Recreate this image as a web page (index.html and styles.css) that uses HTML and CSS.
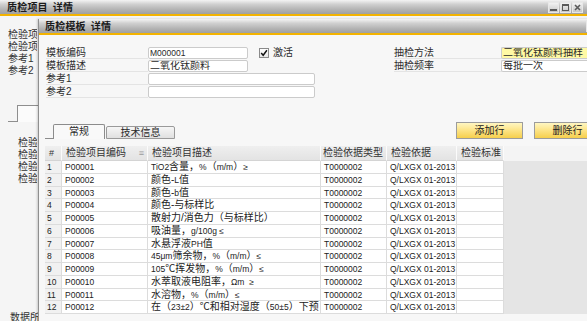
FILE: index.html
```html
<!DOCTYPE html>
<html lang="zh">
<head>
<meta charset="utf-8">
<title>质检模板 详情</title>
<link rel="stylesheet" href="styles.css">
</head>
<body>
<div class="desk">
  <section class="win outer">
    <header class="tbar">
      <span class="ttl">质检项目&nbsp;&nbsp;详情</span>
      <div class="wbtns">
        <span class="wb"><svg viewBox="0 0 11 11" width="11" height="11"><rect x="2" y="7" width="7" height="2" fill="#5a5a5a"/></svg></span>
        <span class="wb"><svg viewBox="0 0 11 11" width="11" height="11"><rect x="2.5" y="2.5" width="6" height="6" fill="none" stroke="#5a5a5a" stroke-width="1"/><rect x="2" y="2" width="7" height="2" fill="#5a5a5a"/></svg></span>
        <span class="wb"><svg viewBox="0 0 11 11" width="11" height="11"><path d="M3 3 L8 8 M8 3 L3 8" stroke="#5a5a5a" stroke-width="1.6"/></svg></span>
      </div>
    </header>
    <div class="obody">
      <div class="olist">
        <div>检验项</div>
        <div>检验项</div>
        <div>参考1</div>
        <div>参考2</div>
      </div>
      <div class="otab"><span class="otab-base"></span><span class="otab-tab"></span></div>
      <div class="olist olist2">
        <div>检验</div>
        <div>检验</div>
        <div>检验</div>
        <div>检验</div>
      </div>
      <div class="obottom">数据所</div>
    </div>
  </section>

  <section class="win inner">
    <header class="tbar">
      <span class="ttl">质检模板&nbsp;&nbsp;详情</span>
      <div class="wbtns">
        <span class="wb"><svg viewBox="0 0 11 11" width="11" height="11"><rect x="2" y="7" width="7" height="2" fill="#5a5a5a"/></svg></span>
        <span class="wb"><svg viewBox="0 0 11 11" width="11" height="11"><rect x="2.5" y="2.5" width="6" height="6" fill="none" stroke="#5a5a5a"/></svg></span>
        <span class="wb"><svg viewBox="0 0 11 11" width="11" height="11"><path d="M3 3 L8 8 M8 3 L3 8" stroke="#5a5a5a" stroke-width="1.6"/></svg></span>
      </div>
    </header>
    <div class="ibody">
      <div class="form">
        <div class="lab">模板编码</div>
        <div class="fld lt">M000001</div>
        <div class="chk"><span class="box"><svg viewBox="0 0 10 10" width="8" height="8"><path d="M1.5 5 L4 7.8 L8.6 1.6" fill="none" stroke="#111" stroke-width="1.8"/></svg></span><span>激活</span></div>
        <div class="lab r">抽检方法</div>
        <div class="fld yel">二氧化钛颜料抽样</div>

        <div class="lab">模板描述</div>
        <div class="fld">二氧化钛颜料</div>
        <div class="lab r">抽检频率</div>
        <div class="fld">每批一次</div>

        <div class="lab">参考1</div>
        <div class="fld wide"></div>

        <div class="lab">参考2</div>
        <div class="fld wide"></div>
      </div>

      <div class="tabrow">
        <div class="tabs">
          <span class="tbase"></span>
          <span class="tab on">常规</span>
          <span class="tab">技术信息</span>
        </div>
        <div class="btns">
          <span class="btn">添加行</span>
          <span class="btn">删除行</span>
        </div>
      </div>

      <div class="grid">
        <div class="ghead">
          <span class="hc c0">#</span>
          <span class="hc c1">检验项目编码<i class="sort">≡</i></span>
          <span class="hc c2">检验项目描述</span>
          <span class="hc c3">检验依据类型</span>
          <span class="hc c4">检验依据</span>
          <span class="hc c5">检验标准</span>
        </div>
        <div class="gr"><span class="c c0">1</span><span class="c c1">P00001</span><span class="c c2"><span class="l">TiO2</span>含量，<span class="l">%</span>（<span class="l">m/m</span>）<span class="l">≥</span></span><span class="c c3">T0000002</span><span class="c c4">Q/LXGX 01-2013</span><span class="c c5"></span></div>
        <div class="gr"><span class="c c0">2</span><span class="c c1">P00002</span><span class="c c2">颜色-<span class="l">L</span>值</span><span class="c c3">T0000002</span><span class="c c4">Q/LXGX 01-2013</span><span class="c c5"></span></div>
        <div class="gr"><span class="c c0">3</span><span class="c c1">P00003</span><span class="c c2">颜色-<span class="l">b</span>值</span><span class="c c3">T0000002</span><span class="c c4">Q/LXGX 01-2013</span><span class="c c5"></span></div>
        <div class="gr"><span class="c c0">4</span><span class="c c1">P00004</span><span class="c c2">颜色-与标样比</span><span class="c c3">T0000002</span><span class="c c4">Q/LXGX 01-2013</span><span class="c c5"></span></div>
        <div class="gr"><span class="c c0">5</span><span class="c c1">P00005</span><span class="c c2">散射力/消色力（与标样比）</span><span class="c c3">T0000002</span><span class="c c4">Q/LXGX 01-2013</span><span class="c c5"></span></div>
        <div class="gr"><span class="c c0">6</span><span class="c c1">P00006</span><span class="c c2">吸油量，<span class="l">g/100g ≤</span></span><span class="c c3">T0000002</span><span class="c c4">Q/LXGX 01-2013</span><span class="c c5"></span></div>
        <div class="gr"><span class="c c0">7</span><span class="c c1">P00007</span><span class="c c2">水悬浮液<span class="l">PH</span>值</span><span class="c c3">T0000002</span><span class="c c4">Q/LXGX 01-2013</span><span class="c c5"></span></div>
        <div class="gr"><span class="c c0">8</span><span class="c c1">P00008</span><span class="c c2"><span class="l">45μm</span>筛余物，<span class="l">%</span>（<span class="l">m/m</span>）<span class="l">≤</span></span><span class="c c3">T0000002</span><span class="c c4">Q/LXGX 01-2013</span><span class="c c5"></span></div>
        <div class="gr"><span class="c c0">9</span><span class="c c1">P00009</span><span class="c c2"><span class="l">105</span>℃挥发物，<span class="l">%</span>（<span class="l">m/m</span>）<span class="l">≤</span></span><span class="c c3">T0000002</span><span class="c c4">Q/LXGX 01-2013</span><span class="c c5"></span></div>
        <div class="gr"><span class="c c0">10</span><span class="c c1">P00010</span><span class="c c2">水萃取液电阻率，<span class="l">Ωm&nbsp;&nbsp;≥</span></span><span class="c c3">T0000002</span><span class="c c4">Q/LXGX 01-2013</span><span class="c c5"></span></div>
        <div class="gr"><span class="c c0">11</span><span class="c c1">P00011</span><span class="c c2">水溶物，<span class="l">%</span>（<span class="l">m/m</span>）<span class="l">≤</span></span><span class="c c3">T0000002</span><span class="c c4">Q/LXGX 01-2013</span><span class="c c5"></span></div>
        <div class="gr"><span class="c c0">12</span><span class="c c1">P00012</span><span class="c c2">在（<span class="l">23±2</span>）℃和相对湿度（<span class="l">50±5</span>）下预</span><span class="c c3">T0000002</span><span class="c c4">Q/LXGX 01-2013</span><span class="c c5"></span></div>
      </div>
    </div>
  </section>
</div>
</body>
</html>
```

FILE: styles.css
```css
* { box-sizing: border-box; }
html, body { margin: 0; padding: 0; }
body {
  width: 587px;
  height: 321px;
  overflow: hidden;
  font-family: "Liberation Sans", "Noto Sans CJK SC", sans-serif;
  font-size: 10px;
  color: #2a2a2a;
  background: #f4f4f4;
}
.desk { position: relative; width: 587px; height: 321px; overflow: hidden; }

.win { display: flex; flex-direction: column; }
.outer { width: 587px; height: 321px; background: #f5f5f5; }

.tbar {
  flex: none;
  height: 16px;
  display: flex;
  align-items: center;
  justify-content: space-between;
  background: linear-gradient(#f4f4f4 0%, #d0d0d0 30%, #b2b2b2 70%, #a0a0a0 100%);
  border-bottom: 2px solid #f3b300;
}
.ttl {
  font-family: "Noto Sans CJK SC", sans-serif;
  font-weight: 700;
  font-size: 10px;
  line-height: 12px;
  color: #1b1b1b;
  padding-left: 7px;
  letter-spacing: 0.2px;
}
.wbtns { display: flex; gap: 1px; padding-right: 4px; }
.wb {
  width: 11px; height: 11px;
  background: linear-gradient(#f2f2f2, #c8c8c8);
  border: 1px solid #e8e8e8;
  display: flex;
}
.wb svg { display: block; margin: -1px; }

.obody { padding-left: 8px; color: #333; }
.olist { margin-top: 13px; width: 29px; overflow: hidden; }
.olist div { height: 12px; line-height: 12px; white-space: nowrap; }
.otab { display: flex; margin-top: 28px; height: 17px; }
.otab-base { width: 9px; border-bottom: 1px solid #8e8e8e; }
.otab-tab { width: 30px; border-top: 1px solid #8e8e8e; border-left: 1px solid #8e8e8e; background: #fbfbfb; }
.olist2 { margin-top: 15px; padding-left: 10px; width: 29px; }
.obottom {
  margin-top: 127px;
  padding-left: 2px;
  line-height: 12px;
  width: 29px;
  white-space: nowrap;
}

.inner {
  position: absolute;
  left: 38px;
  top: 19px;
  width: 588px;
  height: 320px;
  background: #f7f7f7;
  border-left: 1px solid #8f8f8f;
  box-shadow: -1px 0 2px rgba(0, 0, 0, 0.18);
}
.inner .tbar { height: 16px; }
.inner .ttl { padding-left: 6px; }
.inner .wbtns { padding-right: 3px; gap: 2px; }

.ibody { padding-left: 7px; }

.form {
  display: grid;
  grid-template-columns: 102px 100px 67px 79px 107px 100px;
  grid-auto-rows: 12px;
  row-gap: 1px;
  margin-top: 12px;
}
.lab {
  grid-column: 1;
  line-height: 11px;
  border-bottom: 1px solid #e4e4e4;
  white-space: nowrap;
  color: #2e2e2e;
}
.lab.r { grid-column: 5; }
.fld {
  grid-column: 2;
  background: #fff;
  border: 1px solid #cbcbcb;
  border-radius: 2px;
  line-height: 10px;
  padding-left: 1px;
  white-space: nowrap;
  overflow: hidden;
}
.fld.lt { font-size: 8.5px; }
.form .lab.r + .fld { grid-column: 6; border-right: none; border-radius: 2px 0 0 2px; }
.fld.yel { background: #fff9a4; }
.fld.wide { grid-column: 2 / span 2; }
.chk {
  grid-column: 3 / span 2;
  display: flex;
  align-items: center;
  gap: 4px;
  padding-left: 11px;
  line-height: 12px;
}
.box {
  width: 10px; height: 10px;
  border: 1px solid #8a8a8a;
  background: linear-gradient(#ffffff, #e6e6e6);
  display: flex; align-items: center; justify-content: center;
}

.tabrow { display: flex; align-items: flex-end; margin-top: 24px; margin-left: -1px; height: 17px; }
.tabs { display: flex; align-items: flex-end; height: 17px; }
.tbase { width: 8px; height: 1px; border-bottom: 1px solid #8c8c8c; }
.tab {
  width: 69px; height: 13px;
  border: 1px solid #9a9a9a;
  border-radius: 2px 2px 0 0;
  background: linear-gradient(#f6f6f6, #e0e0e0);
  text-align: center;
  line-height: 11px;
  margin-left: 1px;
}
.tab.on {
  width: 52px; height: 15px;
  margin-left: 0;
  border-color: #8c8c8c;
  border-bottom: none;
  background: #f9f9f9;
  line-height: 14px;
}
.btns { display: flex; gap: 11px; margin-left: 281px; }
.btn {
  width: 67px; height: 17px;
  border: 1px solid #9c9c9c;
  background: linear-gradient(#fff6c2 0%, #fde58a 45%, #f6cf4c 100%);
  text-align: center;
  line-height: 15px;
  color: #222;
}

.grid {
  margin-top: 7px;
  margin-left: -1px;
  height: 168px;
  background: #e5e5e5;
}
.ghead { display: flex; height: 15px; background: #f4f4f4; }
.hc {
  height: 15px;
  line-height: 14px;
  background: linear-gradient(#efefef, #e3e3e3);
  border-right: 1px solid #fbfbfb;
  border-bottom: 1px solid #d4d4d4;
  padding-left: 4px;
  white-space: nowrap;
  overflow: hidden;
  position: relative;
  color: #333;
}
.hc.c0 { padding-left: 4px; font-size: 9px; }
.hc.c3 { padding-left: 2px; }
.sort { position: absolute; right: 3px; top: 0; font-style: normal; color: #9a9a9a; font-size: 9px; }
.c0 { width: 17px; }
.c1 { width: 86px; }
.c2 { width: 173px; }
.c3 { width: 66px; }
.c4 { width: 70px; }
.c5 { width: 47px; }

.gr { display: flex; height: 12.75px; }
.c {
  height: 100%;
  background: #fff;
  border-right: 1px solid #dcdcdc;
  border-bottom: 1px solid #dcdcdc;
  padding-left: 3px;
  font-size: 8.5px;
  line-height: 12px;
  white-space: nowrap;
  overflow: hidden;
  color: #222;
}
.c.c0 { background: #f1f1f1; padding-left: 2px; }
.c.c2 { font-size: 10px; }
.c.c2 .l { font-size: 8.5px; }
```
